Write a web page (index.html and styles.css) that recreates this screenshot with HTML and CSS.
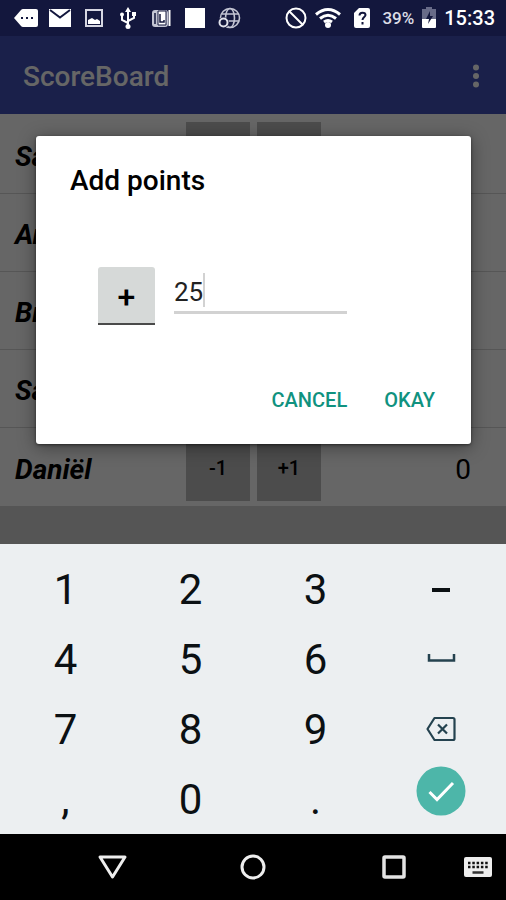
FILE: index.html
```html
<!DOCTYPE html>
<html lang="en">
<head>
<meta charset="utf-8">
<meta name="viewport" content="width=device-width, initial-scale=1">
<title>ScoreBoard</title>
<link rel="stylesheet" href="styles.css">
</head>
<body>
<header class="status">
  <div class="status-group">
    <svg class="icon" viewBox="0 0 24 24"><path fill="#fff" d="M9 3h13a2 2 0 0 1 2 2v14a2 2 0 0 1-2 2H9a3 3 0 0 1-2-1L0 12l7-8a3 3 0 0 1 2-1z"/><path fill="#13173d" d="M7 11h2v2H7zM12 11h2v2h-2zM17 11h2v2h-2z"/></svg>
    <svg class="icon" viewBox="0 0 24 24"><path fill="#fff" d="M1 3h22v18H1z"/><path fill="none" stroke="#13173d" stroke-width="2" d="M2 4l10 7.500L22 4"/></svg>
    <svg class="icon" viewBox="0 0 24 24"><path fill="none" stroke="#d6d7e2" stroke-width="2" d="M4 4h16v16H4z"/><path fill="#fff" d="M6 18v-4l4-2 3 2 2-1 3 2v3z"/></svg>
    <svg class="icon" viewBox="0 0 24 24"><g fill="none" stroke="#fff" stroke-width="2"><path d="M12 4v16M12 17l-6-3V9M12 15l6-3V8"/></g><g fill="#fff"><path d="M12 1l3 5H9z"/><circle cx="12" cy="20.500" r="2.500"/><circle cx="6" cy="8.500" r="2"/><path d="M16 6h4v4h-4z"/></g></svg>
    <svg class="icon" viewBox="0 0 24 24"><rect x="2" y="4" width="16" height="17" rx="3" fill="#c3c5d3"/><path d="M8 5h8v14H8z" fill="#fff" stroke="#13173d" stroke-width="1"/><path d="M10 8v8h4v-2M5 7v11" fill="none" stroke="#13173d" stroke-width="1.500"/><path d="M19.500 4v16" stroke="#fff" stroke-width="2"/></svg>
    <svg class="icon" viewBox="0 0 24 24"><path fill="#fff" d="M1 2h20v20H1z"/></svg>
    <svg class="icon" viewBox="0 0 24 24"><g fill="none" stroke="#c3c5d3" stroke-width="1.600"><circle cx="12" cy="12" r="9.500"/><ellipse cx="12" cy="12" rx="4.500" ry="9.500"/><path d="M4 8h17M9 15h12"/></g><circle cx="5.500" cy="16.500" r="5.500" fill="#13173d"/><circle cx="5.500" cy="16.500" r="4" fill="none" stroke="#e0e1ea" stroke-width="2"/></svg>
  </div>
  <div class="status-group status-group-end">
    <svg class="icon" viewBox="0 0 24 24"><g fill="none" stroke="#fff" stroke-width="2"><circle cx="10" cy="12" r="9.500"/><path d="M3 5l14 14"/></g></svg>
    <svg class="icon" viewBox="0 0 24 24"><g fill="none" stroke="#fff" stroke-width="3"><path d="M-2 8.500q12-10 24 0M2 12.500q8-6.500 16 0M6 16q4-3 8 0"/></g><circle cx="10" cy="19" r="3" fill="#fff"/></svg>
    <svg class="icon" viewBox="0 0 24 24"><path fill="#fff" d="M9 2h9a2 2 0 0 1 2 2v16a2 2 0 0 1-2 2H6a2 2 0 0 1-2-2V7z"/><path fill="none" stroke="#13173d" stroke-width="2" d="M9.500 9.500c0-4 6-3.500 6-.5 0 2-3 2-3 5M12.500 16v2.500"/></svg>
    <span class="percent">39%</span>
    <svg class="battery" viewBox="0 0 14 22"><path fill="#686b88" d="M4 0h6v2h4v11H0V2h4z"/><path fill="#fff" d="M0 12h14v8a1 1 0 0 1-1 1H1a1 1 0 0 1-1-1z"/><path fill="#13173d" d="M8 4L4 12h3l-1 5 5-8H8z"/></svg>
    <time class="clock">15:33</time>
  </div>
</header>

<main class="app">
  <div class="appbar">
    <h1 class="app-title">ScoreBoard</h1>
    <button class="more" aria-label="More options"><svg viewBox="0 0 6 24"><g fill="#fff"><circle cx="3" cy="3.500" r="3"/><circle cx="3" cy="12" r="3"/><circle cx="3" cy="20.500" r="3"/></g></svg></button>
  </div>
  <ul class="players">
    <li class="player"><span class="name">Sa</span><button class="step" aria-label="Subtract"></button><button class="step" aria-label="Add"></button></li>
    <li class="player"><span class="name">An</span></li>
    <li class="player"><span class="name">Br</span></li>
    <li class="player"><span class="name">Sa</span></li>
    <li class="player"><span class="name">Daniël</span><button class="step">-1</button><button class="step">+1</button><span class="score">0</span></li>
  </ul>
  <div class="scrim">
    <form class="dialog" role="dialog" aria-labelledby="dialog-title">
      <h2 class="dialog-title" id="dialog-title">Add points</h2>
      <div class="entry">
        <button type="button" class="sign">+</button>
        <div class="field">
          <input class="points" type="text" inputmode="numeric" value="25" aria-labelledby="dialog-title">
          <span class="caret"></span>
        </div>
      </div>
      <div class="actions">
        <button type="button" class="action">CANCEL</button>
        <button type="button" class="action">OKAY</button>
      </div>
    </form>
  </div>
</main>

<section class="keyboard">
  <button class="key">1</button><button class="key">2</button><button class="key">3</button>
  <button class="key" aria-label="Minus"><svg class="glyph" viewBox="0 0 30 26"><path stroke="#0b1013" stroke-width="4" d="M6 14h18"/></svg></button>
  <button class="key">4</button><button class="key">5</button><button class="key">6</button>
  <button class="key" aria-label="Space"><svg class="glyph" viewBox="0 0 30 26"><path fill="none" stroke="#24424f" stroke-width="2.500" d="M3 8v6.500h25V8"/></svg></button>
  <button class="key">7</button><button class="key">8</button><button class="key">9</button>
  <button class="key" aria-label="Backspace"><svg class="glyph" viewBox="0 0 30 26"><g fill="none" stroke="#24424f" stroke-width="2.200"><path stroke-linejoin="round" d="M8.500 2H27a1.500 1.500 0 0 1 1.500 1.500v19A1.500 1.500 0 0 1 27 24H8.500L1.500 13z"/><path d="M12 8.500l9 9M21 8.500l-9 9"/></g></svg></button>
  <button class="key">,</button><button class="key">0</button><button class="key">.</button>
  <button class="key key-done" aria-label="Done"><svg class="done" viewBox="0 0 50 50"><circle cx="25" cy="25" r="24.500" fill="#4db6a9"/><path fill="none" stroke="#fff" stroke-width="3" d="M13.500 26l7.500 7.500L37 17"/></svg></button>
</section>

<nav class="nav">
  <button class="nav-key" aria-label="Back"><svg class="nav-icon" viewBox="0 0 30 26"><path fill="none" stroke="#eee" stroke-width="3" stroke-linejoin="round" d="M3 3h25L15.500 23z"/></svg></button>
  <button class="nav-key" aria-label="Home"><svg class="nav-icon" viewBox="0 0 30 26"><circle cx="15" cy="13" r="11" fill="none" stroke="#eee" stroke-width="3"/></svg></button>
  <button class="nav-key" aria-label="Overview"><svg class="nav-icon" viewBox="0 0 30 26"><rect x="5" y="3" width="20" height="20" rx="1" fill="none" stroke="#e4e4e4" stroke-width="3.500"/></svg></button>
  <button class="nav-key nav-ime" aria-label="Switch keyboard"><svg class="ime" viewBox="0 0 28 22"><rect y="1" width="28" height="20" rx="2" fill="#eee"/><path fill="none" stroke="#111" stroke-width="2.500" stroke-dasharray="2.500 1.800" d="M4 7h20.500M4 11h20.500"/><path stroke="#333" stroke-width="2.500" d="M8.500 16.500h11"/></svg></button>
</nav>
</body>
</html>
```
FILE: styles.css
```css
* {
  box-sizing: border-box;
}

body {
  margin: 0;
  min-height: 100vh;
  display: flex;
  flex-direction: column;
  background: #000;
  color: #000;
  font-family: Roboto, "Liberation Sans", sans-serif;
}

button {
  padding: 0;
  border: 0;
  background: none;
  color: inherit;
  font: inherit;
}

svg {
  display: block;
  overflow: visible;
}

.status {
  display: flex;
  justify-content: space-between;
  align-items: center;
  height: 36px;
  padding: 0 11px 0 14px;
  background: #13173d;
  color: #fff;
}

.status-group {
  display: flex;
  align-items: center;
  gap: 10px;
}

.status-group-end {
  gap: 8px;
}

.icon {
  width: 24px;
  height: 24px;
}

.percent {
  font-size: 17px;
  font-weight: 500;
  color: #dcdde6;
}

.battery {
  width: 14px;
  height: 22px;
}

.clock {
  font-size: 20px;
  font-weight: 500;
}

.app {
  position: relative;
  flex: 1;
  background: #d5d5d5;
}

.appbar {
  display: flex;
  justify-content: space-between;
  align-items: center;
  height: 78px;
  padding: 2px 27px 0 23px;
  background: #4150b8;
  color: #fff;
}

.app-title {
  margin: 0;
  font-size: 28px;
  font-weight: 500;
}

.more svg {
  width: 6px;
  height: 24px;
}

.players {
  margin: 0;
  padding: 2px 0 0;
  list-style: none;
  background: #fff;
}

.player {
  display: grid;
  grid-template-columns: 164px 64px 64px 1fr;
  column-gap: 7px;
  align-items: center;
  height: 78px;
  padding: 1px 35px 0 15px;
  border-bottom: 1px solid #d8d8d8;
}

.player:last-child {
  border-bottom: 0;
}

.name {
  padding-top: 3px;
  font-size: 28px;
  font-weight: 700;
  font-style: italic;
}

.step {
  height: 66px;
  background: #bebebe;
  font-size: 20px;
  font-weight: 500;
}

.score {
  padding-top: 4px;
  font-size: 28px;
  text-align: right;
}

.scrim {
  position: absolute;
  inset: 0;
  display: flex;
  align-items: center;
  padding: 0 35px 0 36px;
  background: rgba(0, 0, 0, 0.6);
}

.dialog {
  flex: 1;
  padding: 28px 36px 26px 34px;
  border-radius: 3px;
  background: #fff;
  box-shadow: 0 3px 18px rgba(0, 0, 0, 0.4), 0 1px 3px rgba(0, 0, 0, 0.5);
}

.dialog-title {
  margin: 0;
  font-size: 28px;
  font-weight: 500;
  line-height: 34px;
}

.entry {
  display: flex;
  align-items: flex-start;
  gap: 19px;
  margin: 69px 53px 57px 28px;
}

.sign {
  width: 57px;
  height: 58px;
  padding-top: 4px;
  border-bottom: 2px solid #4a4a4a;
  border-radius: 3px 3px 0 0;
  background: #d6d9d8;
  font-size: 32px;
  font-weight: 500;
}

.field {
  position: relative;
  width: 173px;
  height: 47px;
  border-bottom: 3px solid #d2d2d2;
}

.points {
  width: 100%;
  height: 44px;
  padding: 6px 0 0;
  border: 0;
  outline: 0;
  background: none;
  color: #222;
  font: 26px Roboto, "Liberation Sans", sans-serif;
}

.caret {
  position: absolute;
  top: 6px;
  left: 29px;
  width: 2px;
  height: 34px;
  background: #d2d2d2;
}

.actions {
  display: flex;
  justify-content: flex-end;
  gap: 37px;
}

.action {
  height: 36px;
  color: #10927f;
  font-size: 20px;
  font-weight: 500;
}

.keyboard {
  display: grid;
  grid-template-columns: repeat(4, 1fr);
  grid-auto-rows: 70px;
  padding: 10px 3px 0;
  background: #eceff1;
}

.key {
  display: flex;
  justify-content: center;
  align-items: center;
  color: #0b1013;
  font-size: 42px;
}

.key-done {
  align-items: flex-start;
  padding-top: 2px;
}

.glyph {
  width: 30px;
  height: 26px;
}

.done {
  width: 50px;
  height: 50px;
}

.nav {
  display: grid;
  grid-template-columns: 1fr 1fr 1fr 42px;
  height: 66px;
  padding-left: 42px;
  background: #000;
}

.nav-key {
  display: flex;
  justify-content: center;
  align-items: center;
}

.nav-ime {
  justify-content: flex-start;
}

.nav-icon {
  width: 30px;
  height: 26px;
}

.ime {
  width: 28px;
  height: 22px;
}
```
